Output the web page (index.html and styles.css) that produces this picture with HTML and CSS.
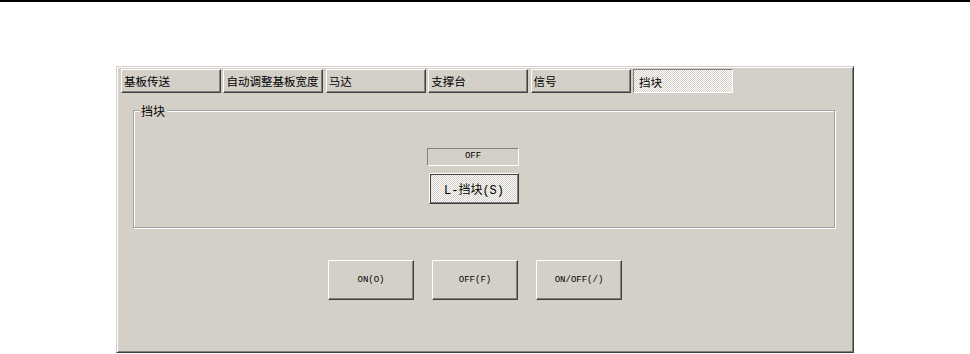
FILE: index.html
```html
<!DOCTYPE html>
<html lang="zh">
<head>
  <meta charset="UTF-8" />
  <title>挡块</title>
  <link rel="stylesheet" href="styles.css">
</head>
<body>
  <div class="topline"></div>
  <div class="panel">
    <div class="tabs">
      <div class="tab">基板传送</div>
      <div class="tab">自动调整基板宽度</div>
      <div class="tab">马达</div>
      <div class="tab">支撑台</div>
      <div class="tab">信号</div>
      <div class="tab active">挡块</div>
    </div>

    <div class="group">
      <span class="group-label">挡块</span>
      <div class="status">OFF</div>
      <button class="btn stop-btn">L-挡块(S)</button>
    </div>

    <div class="actions">
      <button class="btn small">ON(O)</button>
      <button class="btn small">OFF(F)</button>
      <button class="btn small">ON/OFF(/)</button>
    </div>
  </div>
</body>
</html>
```

FILE: styles.css
```css
body {
  margin: 0;
  background: #fff;
  font-family: "Liberation Mono", "Noto Sans CJK SC", monospace;
  font-size: 12px;
  color: #000;
}
.topline {
  height: 2px;
  background: #000;
}
.panel {
  box-sizing: border-box;
  margin: 64px 0 0 116px;
  width: 738px;
  height: 287px;
  background: #d4d0c8;
  border-top: 1px solid #d4d0c8;
  border-left: 1px solid #d4d0c8;
  border-right: 1px solid #404040;
  border-bottom: 1px solid #404040;
  box-shadow: inset 1px 1px 0 #fff, inset -1px -1px 0 #808080;
  padding: 2px 0 0 4px;
}
.tabs {
  display: flex;
  gap: 2.4px;
}
.tab {
  box-sizing: border-box;
  width: 100px;
  height: 24px;
  padding: 4px 0 0 2px;
  white-space: nowrap;
  overflow: hidden;
  font-family: "Noto Sans CJK SC", sans-serif;
  font-size: 11.5px;
  line-height: 14px;
  border-top: 1px solid #fff;
  border-left: 1px solid #fff;
  border-right: 1px solid #404040;
  border-bottom: 1px solid #404040;
  box-shadow: inset -1px -1px 0 #808080;
}
.tab.active {
  border-top: 1px solid #808080;
  border-left: 1px solid #808080;
  border-right: 1px solid #fff;
  border-bottom: 1px solid #fff;
  box-shadow: none;
  padding-top: 5px;
  padding-left: 5px;
  background: repeating-conic-gradient(#fff 0 25%, #d4d0c8 0 50%) 0 0 / 2px 2px;
}
.group {
  position: relative;
  box-sizing: border-box;
  margin: 17px 0 0 12px;
  width: 702px;
  height: 118px;
  border: 1px solid #a0a0a0;
  box-shadow: 1px 1px 0 #fff, inset 1px 1px 0 #fff;
  padding: 37px 0 0 293px;
}
.group-label {
  position: absolute;
  top: -7px;
  left: 5px;
  padding: 0 2px;
  background: #d4d0c8;
  font-family: "Noto Sans CJK SC", sans-serif;
  font-size: 12px;
  line-height: 13px;
}
.status {
  box-sizing: border-box;
  width: 92px;
  height: 18px;
  border-top: 1px solid #808080;
  border-left: 1px solid #808080;
  border-right: 1px solid #fff;
  border-bottom: 1px solid #fff;
  text-align: center;
  font-size: 9px;
  line-height: 14px;
}
.btn {
  box-sizing: border-box;
  display: block;
  margin: 0;
  padding: 0;
  background: #d4d0c8;
  color: #000;
  border-top: 1px solid #fff;
  border-left: 1px solid #fff;
  border-right: 1px solid #404040;
  border-bottom: 1px solid #404040;
  box-shadow: inset -1px -1px 0 #808080;
  font-family: "Liberation Mono", "Noto Sans CJK SC", monospace;
}
.stop-btn {
  margin: 7px 0 0 2px;
  width: 90px;
  height: 31px;
  font-size: 12px;
  background: repeating-conic-gradient(#fff 0 25%, #d4d0c8 0 50%) 0 0 / 2px 2px;
  box-shadow: inset 1px 1px 0 #404040, inset -1px -1px 0 #808080;
}
.actions {
  display: flex;
  gap: 18px;
  margin: 32px 0 0 207px;
}
.btn.small {
  width: 86px;
  height: 40px;
  font-size: 9px;
}
```
